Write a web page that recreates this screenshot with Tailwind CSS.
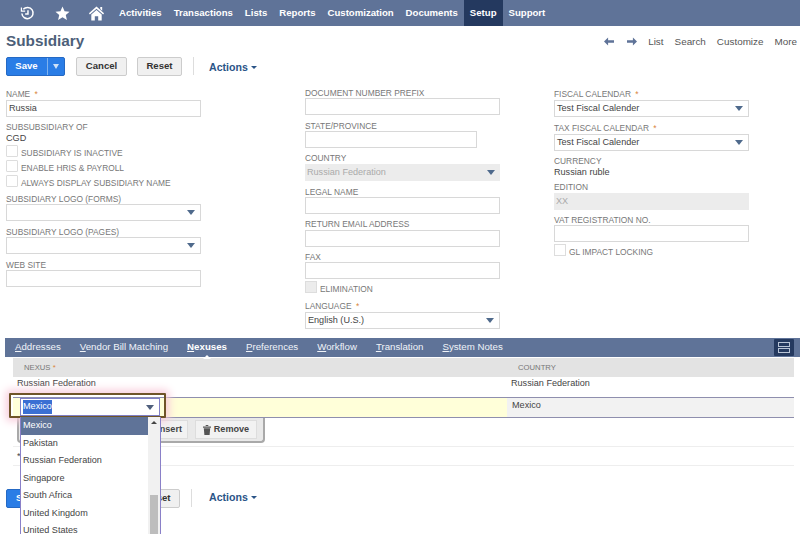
<!DOCTYPE html>
<html lang="en">
<head>
  <meta charset="UTF-8">
  <title>Subsidiary</title>
  <script src="https://cdn.jsdelivr.net/npm/@tailwindcss/browser@4"></script>
</head>
<body class="relative w-[800px] h-[534px] overflow-hidden bg-white text-[#444] font-['Liberation_Sans',Arial,sans-serif]">

  <!-- top nav -->
  <nav class="flex items-center h-[26px] bg-[#5f7398] text-white text-[9.6px] font-bold">
    <svg class="ml-[20px] w-[15px] h-[15px]" viewBox="0 0 16 16" fill="none" stroke="#fff" stroke-width="1.6"><path d="M3.5 3.500A6 6 0 1 1 2 8"/><path d="M1.500 1.500v4H5.500" stroke-width="1.300"/><path d="M8.500 4.500V8.500H5.500"/></svg>
    <svg class="ml-[20px] w-[15px] h-[15px]" viewBox="0 0 16 16" fill="#fff"><path d="M8 .5l2.200 5 5.300.5-4 3.600 1.200 5.300L8 12.100l-4.700 2.800 1.200-5.300-4-3.600 5.300-.5z"/></svg>
    <svg class="ml-[18px] w-[17px] h-[17px]" viewBox="0 0 18 18" fill="#fff"><path d="M9 1.500 17 8.700 16 10 9 3.900 2 10 1 8.700z"/><path d="M13 2h2v4l-2-1.800z"/><path d="M3.500 10 9 5.300l5.500 4.700v6.500h-3.700V12H7.200v4.500H3.500z"/></svg>
    <a class="ml-[14px]">Activities</a>
    <a class="ml-[12px]">Transactions</a>
    <a class="ml-[12px]">Lists</a>
    <a class="ml-[12px]">Reports</a>
    <a class="ml-[12px]">Customization</a>
    <a class="ml-[12px]">Documents</a>
    <a class="ml-[6px] flex items-center h-full px-[6px] bg-[#24395f]">Setup</a>
    <a class="ml-[6px]">Support</a>
  </nav>

  <!-- title row -->
  <div class="flex items-center justify-between h-[31px] pl-[6px] pr-[3px]">
    <h1 class="text-[15.3px] font-bold text-[#4d5f79]">Subsidiary</h1>
    <div class="flex items-center gap-[11px] text-[9.9px] text-[#555] mt-[1px]">
      <svg class="w-[10px] h-[9px] mr-[2px]" viewBox="0 0 11 9" fill="#5f7398"><path d="M0 4.500 4.500 0v3H11v3H4.500v3z"/></svg>
      <svg class="w-[10px] h-[9px]" viewBox="0 0 11 9" fill="#5f7398"><path d="M11 4.500 6.500 0v3H0v3h6.500v3z"/></svg>
      <span>List</span><span>Search</span><span>Customize</span><span>More</span>
    </div>
  </div>

  <!-- buttons -->
  <div class="flex items-center h-[20px] mt-[-1px] pl-[6px] text-[9.6px] font-bold">
    <div class="flex h-[19px] w-[59px] rounded-[2px] bg-[#2a7de6] text-white border border-[#2569c4]">
      <span class="flex-1 flex items-center justify-center pr-[1px]">Save</span>
      <span class="flex items-center justify-center w-[17px] border-l border-[#7fb2ee]"><span class="w-0 h-0 border-x-[3px] border-t-[5px] border-x-transparent border-t-[#cfe2f8]"></span></span>
    </div>
    <span class="flex items-center justify-center ml-[11px] w-[51px] h-[19px] rounded-[2px] bg-[#f0f0f0] border border-[#ccc] text-[#333]">Cancel</span>
    <span class="flex items-center justify-center ml-[10px] w-[45px] h-[19px] rounded-[2px] bg-[#f0f0f0] border border-[#ccc] text-[#333]">Reset</span>
    <span class="ml-[11px] w-px h-[18px] bg-[#ddd]"></span>
    <span class="flex items-center ml-[15px] text-[10.6px] text-[#2b5487] mt-[4px]">Actions<span class="ml-[3px] w-0 h-0 border-x-[3px] border-t-[3px] border-x-transparent border-t-[#2b5487]"></span></span>
  </div>

  <!-- form columns -->
  <div class="grid grid-cols-[299px_249px_195px] ml-[6px] h-[262px] text-[8.4px] text-[#777]">
    <div class="pt-[12px] w-[195px]">
      <p class="leading-[11px] translate-y-[1px]">NAME <span class="text-[#d9833a] ml-[2px]">*</span></p>
      <div class="mt-[1px] h-[17px] border border-[#d8d8d8] flex items-center pl-[2px] text-[9.1px] text-[#444]">Russia</div>
      <p class="mt-[5px] leading-[11px]">SUBSUBSIDIARY OF</p>
      <p class="text-[9.1px] leading-[11px] text-[#444]">CGD</p>
      <div class="mt-[1px] flex flex-col gap-[3px]">
        <label class="flex items-end h-[12px]"><span class="w-[12px] h-[12px] border border-[#ddd] rounded-[1px]"></span><span class="ml-[3px] leading-[9px] translate-y-[1px]">SUBSIDIARY IS INACTIVE</span></label>
        <label class="flex items-end h-[12px]"><span class="w-[12px] h-[12px] border border-[#ddd] rounded-[1px]"></span><span class="ml-[3px] leading-[9px] translate-y-[1px]">ENABLE HRIS &amp; PAYROLL</span></label>
        <label class="flex items-end h-[12px]"><span class="w-[12px] h-[12px] border border-[#ddd] rounded-[1px]"></span><span class="ml-[3px] leading-[9px] translate-y-[1px]">ALWAYS DISPLAY SUBSIDIARY NAME</span></label>
      </div>
      <p class="mt-[6px] leading-[11px] translate-y-[1px]">SUBSIDIARY LOGO (FORMS)</p>
      <div class="h-[17px] border border-[#d8d8d8] flex items-center justify-end pr-[5px]"><span class="w-0 h-0 border-x-[4px] border-t-[5px] border-x-transparent border-t-[#4f6a8c]"></span></div>
      <p class="mt-[5px] leading-[11px] translate-y-[1px]">SUBSIDIARY LOGO (PAGES)</p>
      <div class="h-[17px] border border-[#d8d8d8] flex items-center justify-end pr-[5px]"><span class="w-0 h-0 border-x-[4px] border-t-[5px] border-x-transparent border-t-[#4f6a8c]"></span></div>
      <p class="mt-[5px] leading-[11px] translate-y-[1px]">WEB SITE</p>
      <div class="h-[17px] border border-[#d8d8d8]"></div>
    </div>

    <div class="pt-[11px] w-[195px]">
      <p class="leading-[11px] translate-y-[1px]">DOCUMENT NUMBER PREFIX</p>
      <div class="h-[17px] border border-[#d8d8d8]"></div>
      <p class="mt-[5px] leading-[11px] translate-y-[1px]">STATE/PROVINCE</p>
      <div class="h-[17px] w-[172px] border border-[#d8d8d8]"></div>
      <p class="mt-[5px] leading-[11px]">COUNTRY</p>
      <div class="h-[17px] bg-[#ececec] flex items-center justify-between pl-[2px] pr-[5px] text-[9.1px] text-[#aaa]">Russian Federation<span class="w-0 h-0 border-x-[4px] border-t-[5px] border-x-transparent border-t-[#4f6a8c]"></span></div>
      <p class="mt-[5px] leading-[11px] translate-y-[1px]">LEGAL NAME</p>
      <div class="h-[17px] border border-[#d8d8d8]"></div>
      <p class="mt-[5px] leading-[11px]">RETURN EMAIL ADDRESS</p>
      <div class="h-[17px] border border-[#d8d8d8]"></div>
      <p class="mt-[4px] leading-[11px] translate-y-[1px]">FAX</p>
      <div class="h-[17px] border border-[#d8d8d8]"></div>
      <label class="flex items-end mt-[2px] h-[12px]"><span class="w-[12px] h-[12px] bg-[#ececec] border border-[#ddd]"></span><span class="ml-[3px] leading-[9px] translate-y-[1px]">ELIMINATION</span></label>
      <p class="mt-[8px] leading-[11px]">LANGUAGE <span class="text-[#d9833a] ml-[2px]">*</span></p>
      <div class="h-[17px] border border-[#d8d8d8] flex items-center justify-between pl-[2px] pr-[5px] text-[9.1px] text-[#444]">English (U.S.)<span class="w-0 h-0 border-x-[4px] border-t-[5px] border-x-transparent border-t-[#4f6a8c]"></span></div>
    </div>

    <div class="pt-[12px]">
      <p class="leading-[11px] translate-y-[1px]">FISCAL CALENDAR <span class="text-[#d9833a] ml-[2px]">*</span></p>
      <div class="mt-[1px] h-[17px] border border-[#d8d8d8] flex items-center justify-between pl-[2px] pr-[5px] text-[9.1px] text-[#444]">Test Fiscal Calender<span class="w-0 h-0 border-x-[4px] border-t-[5px] border-x-transparent border-t-[#4f6a8c]"></span></div>
      <p class="mt-[6px] leading-[11px]">TAX FISCAL CALENDAR <span class="text-[#d9833a] ml-[2px]">*</span></p>
      <div class="h-[17px] border border-[#d8d8d8] flex items-center justify-between pl-[2px] pr-[5px] text-[9.1px] text-[#444]">Test Fiscal Calender<span class="w-0 h-0 border-x-[4px] border-t-[5px] border-x-transparent border-t-[#4f6a8c]"></span></div>
      <p class="mt-[5px] leading-[11px]">CURRENCY</p>
      <p class="text-[9.1px] leading-[11px] text-[#444]">Russian ruble</p>
      <p class="mt-[4px] leading-[11px]">EDITION</p>
      <div class="h-[17px] bg-[#ececec] flex items-center pl-[2px] text-[9.1px] text-[#aaa]">XX</div>
      <p class="mt-[4px] leading-[11px] translate-y-[1px]">VAT REGISTRATION NO.</p>
      <div class="h-[17px] border border-[#d8d8d8]"></div>
      <label class="flex items-end mt-[2px] h-[12px]"><span class="w-[12px] h-[12px] border border-[#ddd]"></span><span class="ml-[3px] leading-[9px] translate-y-[1px]">GL IMPACT LOCKING</span></label>
    </div>
  </div>

  <!-- tabs -->
  <div class="flex items-center justify-between h-[19px] ml-[5px] bg-[#5f7398] text-[9.7px] text-[#f0f3f8]">
    <div class="flex items-center gap-[19px] pl-[10px]">
      <span><u>A</u>ddresses</span>
      <span><u>V</u>endor Bill Matching</span>
      <span class="relative font-bold text-white"><u>N</u>exuses<span class="absolute left-[16px] bottom-[-4px] w-0 h-0 border-x-[4px] border-b-[4px] border-x-transparent border-b-white"></span></span>
      <span><u>P</u>references</span>
      <span><u>W</u>orkflow</span>
      <span><u>T</u>ranslation</span>
      <span><u>S</u>ystem Notes</span>
    </div>
    <span class="flex flex-col items-center justify-center gap-[1px] w-[20px] h-[17px] mr-[6px] bg-[#24395f] rounded-[1px]">
      <span class="w-[12px] h-[5px] border border-[#b8c4d6]"></span>
      <span class="w-[12px] h-[5px] border border-[#b8c4d6]"></span>
    </span>
  </div>

  <!-- nexus table -->
  <div class="ml-[13px] w-[781px] text-[9.1px]">
    <div class="flex items-center h-[19px] mt-[1px] bg-[#e3e3e3] text-[7.7px] text-[#777]">
      <span class="w-[505px] pl-[11px]">NEXUS <span class="text-[#d9833a]">*</span></span>
      <span>COUNTRY</span>
    </div>
    <div class="flex items-center h-[20px] pb-[6px]">
      <span class="w-[498px] pl-[4px]">Russian Federation</span>
      <span>Russian Federation</span>
    </div>
    <div class="flex h-[21px] border-y border-[#8f8fae]">
      <div class="w-[494px] bg-[#ffffd9]"></div>
      <div class="flex-1 bg-[#f2f2f2] pl-[5px] pt-[1px]">Mexico</div>
    </div>
    <div class="flex items-center ml-[4px] w-[248px] h-[25px] pl-[131px] bg-[#e9e9e9] border-x-[2px] border-b-[2px] border-[#a9a9a9] rounded-b-[4px] font-bold">
      <span class="flex items-center justify-end w-[38px] h-[19px] pr-[5px] bg-[#f2f2f2] border border-[#ddd]">Insert</span>
      <span class="flex items-center justify-center gap-[3px] ml-[7px] w-[62px] h-[19px] bg-[#f2f2f2] border border-[#ddd]">
        <svg class="w-[8px] h-[10px]" viewBox="0 0 8 10" fill="#555"><path d="M0 1.500h8V2.700H0zM2.700 0h2.600v1H2.700zM.8 3.300h6.400L6.600 10H1.400z"/></svg>
        Remove
      </span>
    </div>
    <div class="h-[20px] mt-[3px] border-y border-[#eee] pl-[4px] leading-[18px]">*</div>
  </div>

  <!-- bottom buttons -->
  <div class="flex items-center h-[20px] mt-[22px] pl-[6px] text-[9.6px] font-bold">
    <div class="flex h-[19px] w-[59px] rounded-[2px] bg-[#2a7de6] text-white border border-[#2569c4] pl-[9px] items-center">Save</div>
    <span class="flex items-center justify-center ml-[11px] w-[51px] h-[19px] rounded-[2px] bg-[#f0f0f0] border border-[#ccc] text-[#333]">Cancel</span>
    <span class="flex items-center justify-center ml-[8px] w-[45px] h-[19px] rounded-[2px] bg-[#f0f0f0] border border-[#ccc] text-[#333]">Reset</span>
    <span class="ml-[11px] w-px h-[18px] bg-[#ddd]"></span>
    <span class="flex items-center ml-[17px] text-[10.6px] text-[#2b5487]">Actions<span class="ml-[3px] w-0 h-0 border-x-[3px] border-t-[3px] border-x-transparent border-t-[#2b5487]"></span></span>
  </div>

  <!-- highlight round the edited select -->
  <div class="absolute left-[9px] top-[393px] w-[157px] h-[25px] border-[2px] border-[#6f5428] rounded-[1px] shadow-[0_0_8px_3px_#f8ccdb]"></div>
  <div class="absolute left-[20px] top-[398px] w-[140px] h-[18px] flex items-center justify-between pl-[2px] pr-[5px] bg-white border border-[#7f7fc6] text-[9.1px]">
    <span class="bg-[#3a6fd3] text-white">Mexico</span>
    <span class="w-0 h-0 border-x-[4px] border-t-[5px] border-x-transparent border-t-[#4f5f7c]"></span>
  </div>

  <!-- open dropdown -->
  <div class="absolute left-[20px] top-[417px] w-[141px] h-[120px] flex bg-white border-x border-[#8a80c8] text-[9.1px] text-[#444]">
    <ul class="flex-1 leading-[17.5px]">
      <li class="pl-[2px] bg-[#5f7398] text-white">Mexico</li>
      <li class="pl-[2px]">Pakistan</li>
      <li class="pl-[2px]">Russian Federation</li>
      <li class="pl-[2px]">Singapore</li>
      <li class="pl-[2px]">South Africa</li>
      <li class="pl-[2px]">United Kingdom</li>
      <li class="pl-[2px]">United States</li>
    </ul>
    <div class="relative w-[12px] bg-[#f1f1f1]">
      <span class="absolute left-[3px] top-[4px] w-0 h-0 border-x-[3px] border-b-[3px] border-x-transparent border-b-[#444]"></span>
      <span class="absolute left-[2px] top-[78px] w-[8px] h-[40px] bg-[#bdbdbd]"></span>
    </div>
  </div>
</body>
</html>
